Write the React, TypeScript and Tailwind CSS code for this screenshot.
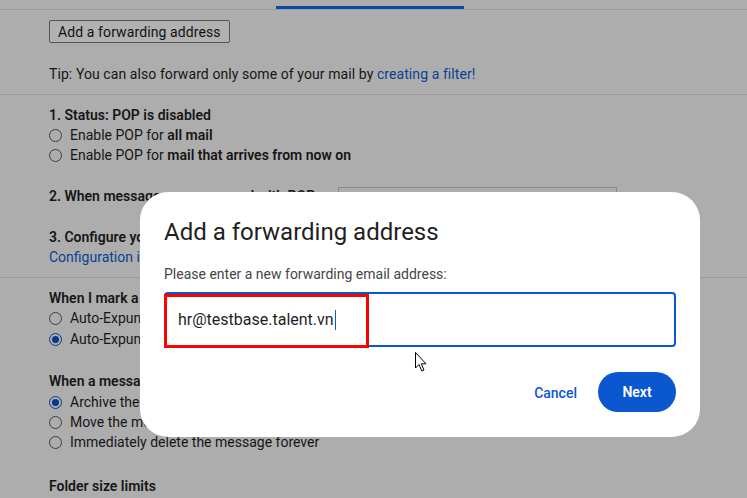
import React from "react";

function Radio({ checked }: { checked?: boolean }) {
  return checked ? (
    <span className="w-[13px] h-[13px] rounded-full border-[1.5px] border-[#07398a] flex items-center justify-center shrink-0">
      <span className="w-[7px] h-[7px] rounded-full bg-[#07398a]" />
    </span>
  ) : (
    <span className="w-[13px] h-[13px] rounded-full border border-[#3e3e3e] shrink-0" />
  );
}

function RadioRow({ checked, children }: { checked?: boolean; children: React.ReactNode }) {
  return (
    <div className="flex items-center h-[20px] gap-[8px]">
      <Radio checked={checked} />
      <span className="whitespace-nowrap">{children}</span>
    </div>
  );
}

export default function App() {
  return (
    <div
      className="relative w-[747px] h-[498px] overflow-hidden bg-[#adadad] text-[#161616] text-[14px]"
      style={{ fontFamily: "Roboto, 'Liberation Sans', sans-serif" }}
    >
      {/* tabs bar */}
      <div className="h-[10px] border-b border-[#9c9c9c] flex items-end">
        <div className="ml-[276px] w-[188px] h-[3px] bg-[#0a4aa3]" />
      </div>

      <div className="pl-[49px]">
        <div className="mt-[10px] flex">
          <div className="h-[23px] px-[8px] border border-[#555] rounded-[2px] bg-[#b1b1b1] flex items-center leading-none whitespace-nowrap text-[#111] tracking-[0.1px]">
            Add a forwarding address
          </div>
        </div>
        <div className="mt-[21px] h-[20px] leading-[20px] whitespace-nowrap tracking-[0.08px]">
          Tip: You can also forward only some of your mail by{" "}
          <span className="text-[#0a3f95]">creating a filter!</span>
        </div>
      </div>
      <div className="mt-[10px] border-t border-[#9c9c9c]" />

      <div className="pl-[49px]">
        <div className="mt-[10px] h-[20px] leading-[20px] font-semibold">1. Status: POP is disabled</div>
        <RadioRow>
          Enable POP for <b className="font-semibold">all mail</b>
        </RadioRow>
        <RadioRow>
          Enable POP for <b className="font-semibold">mail that arrives from now on</b>
        </RadioRow>

        <div className="mt-[21px] h-[20px] flex items-center">
          <span className="w-[289px] shrink-0 font-semibold whitespace-nowrap leading-[20px]">
            2. When messages are accessed with POP
          </span>
          <span className="w-[279px] h-[26px] mt-[8px] border border-[#8a8a8a] text-[#5a5a5a] pl-[8px] flex items-center whitespace-nowrap">
            keep Gmail's copy in the Inbox
          </span>
        </div>

        <div className="mt-[21px] h-[20px] leading-[20px] font-semibold whitespace-nowrap">
          3. Configure your email client (e.g. Outlook, Eudora, Netscape Mail)
        </div>
        <div className="h-[20px] leading-[20px] text-[#0a3f95] whitespace-nowrap">Configuration instructions</div>
      </div>
      <div className="mt-[10px] border-t border-[#9c9c9c]" />

      <div className="pl-[49px]">
        <div className="mt-[10px] h-[20px] leading-[20px] font-semibold whitespace-nowrap">
          When I mark a message in IMAP as deleted:
        </div>
        <RadioRow>Auto-Expunge on - Immediately update the server. (default)</RadioRow>
        <div className="h-[1px]" />
        <RadioRow checked>Auto-Expunge off - Wait for the client to update the server.</RadioRow>

        <div className="mt-[22px] h-[20px] leading-[20px] font-semibold whitespace-nowrap">
          When a message is marked as deleted and expunged from the last visible IMAP folder:
        </div>
        <div className="h-[1px]" />
        <RadioRow checked>Archive the message (default)</RadioRow>
        <RadioRow>Move the message to the Trash</RadioRow>
        <RadioRow>Immediately delete the message forever</RadioRow>

        <div className="mt-[24px] h-[20px] leading-[20px] font-semibold">Folder size limits</div>
      </div>

      {/* Dialog */}
      <div className="absolute left-[140px] top-[192px] w-[560px] h-[245px] rounded-[28px] bg-white pl-[24px] pr-[24px] pt-[24px]">
        <div className="text-[24px] leading-[32px] text-[#1f1f1f] whitespace-nowrap">Add a forwarding address</div>
        <div className="mt-[16px] text-[14px] leading-[20px] text-[#444746] whitespace-nowrap">
          Please enter a new forwarding email address:
        </div>
        <div className="relative mt-[8px] h-[55px] border-2 border-[#0b57d0] rounded-[4px] flex items-center pl-[12px]">
          <span className="text-[16px] text-[#1f1f1f] whitespace-nowrap">hr@testbase.talent.vn</span>
          <span className="ml-[1px] w-[1px] h-[20px] bg-[#0b57d0]" />
          <div className="absolute left-[-2px] top-0 w-[205px] h-[54px] border-[3px] border-[#ff0000]" />
        </div>
        <div className="mt-[25px] flex justify-end items-center gap-[9px]">
          <div className="h-[40px] px-[12px] flex items-center text-[#0b57d0] font-medium text-[14px] pt-[2px]">Cancel</div>
          <div className="h-[40px] w-[78px] rounded-full bg-[#0b57d0] text-white font-semibold text-[14px] flex items-center justify-center pt-[1px]">
            Next
          </div>
        </div>
      </div>

      {/* mouse cursor */}
      <svg className="absolute left-[415px] top-[352px]" width="14" height="22" viewBox="0 0 14 22">
        <path d="M0.5 0.5 L0.5 16 L4 12.5 L6.8 19 L9 18 L6.3 11.8 L11 11.8 Z" fill="#fff" stroke="#000" strokeWidth="1" strokeLinejoin="round" />
      </svg>
    </div>
  );
}
